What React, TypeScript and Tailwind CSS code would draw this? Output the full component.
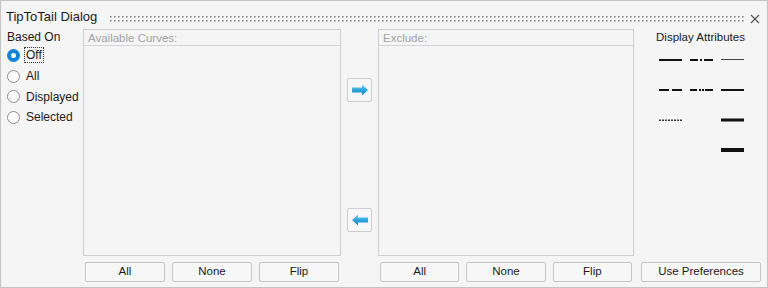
import React from "react";

const font = { fontFamily: '"Liberation Sans", Arial, sans-serif' };

function Btn({ label, w = "w-[80px]" }: { label: string; w?: string }) {
  return (
    <button
      className={`${w} h-[20px] border border-[#c6c6c6] rounded-[2px] bg-[#f7f7f7] text-[11.5px] text-[#1a1a1a] leading-none flex items-center justify-center`}
    >
      {label}
    </button>
  );
}

function ListBox({ title, w }: { title: string; w: string }) {
  return (
    <div className={`${w} h-[227px] border border-[#cfcfcf] flex flex-col`}>
      <div className="h-[16px] border-b border-[#d6d6d6] pl-[4px] text-[11.5px] text-[#a3a3a3] leading-[16px]">
        {title}
      </div>
      <div className="flex-1" />
    </div>
  );
}

function Radio({ label, checked, focus }: { label: string; checked?: boolean; focus?: boolean }) {
  return (
    <div className="flex items-center h-[20.7px]">
      {checked ? (
        <div className="w-[13px] h-[13px] rounded-full bg-[#0f84d6] flex items-center justify-center">
          <div className="w-[5px] h-[5px] rounded-full bg-white" />
        </div>
      ) : (
        <div className="w-[13px] h-[13px] rounded-full border border-[#8a8a8a] bg-white" />
      )}
      <span
        className={`ml-[4px] text-[12px] text-[#1a1a1a] leading-[14px] px-[1px] ${
          focus ? "border border-dotted border-[#333]" : "border border-transparent"
        }`}
      >
        {label}
      </span>
    </div>
  );
}

function Arrow({ dir }: { dir: "right" | "left" }) {
  return (
    <button className="w-[25px] h-[24px] border border-[#cdcdcd] rounded-[2px] bg-[#f7f7f7] flex items-center justify-center">
      <svg width="18" height="12" viewBox="0 0 18 12">
        <defs>
          <linearGradient id={`g${dir}`} x1="0" y1="0" x2="0" y2="1">
            <stop offset="0" stopColor="#7fd3f5" />
            <stop offset="0.5" stopColor="#2aa5de" />
            <stop offset="1" stopColor="#137fc0" />
          </linearGradient>
        </defs>
        {dir === "right" ? (
          <path d="M1 3.5 H11 V0.5 L17 6 L11 11.5 V8.5 H1 Z" fill={`url(#g${dir})`} />
        ) : (
          <path d="M17 3.5 H7 V0.5 L1 6 L7 11.5 V8.5 H17 Z" fill={`url(#g${dir})`} />
        )}
      </svg>
    </button>
  );
}

function Line({ kind }: { kind: string }) {
  const w = 23;
  return (
    <svg width={w} height="6" viewBox="0 0 23 6" className="block">
      {kind === "solid" && <rect x="0" y="2" width="23" height="2" fill="#111" />}
      {kind === "thin" && <rect x="0" y="2" width="23" height="1" fill="#444" />}
      {kind === "medium" && <rect x="0" y="2" width="23" height="2" fill="#111" />}
      {kind === "thick" && <rect x="0" y="1.5" width="23" height="3" fill="#111" />}
      {kind === "thicker" && <rect x="0" y="1" width="23" height="4" fill="#111" />}
      {kind === "dashdot" && (
        <g fill="#111">
          <rect x="0" y="2" width="8" height="2" />
          <rect x="10" y="2" width="2" height="2" />
          <rect x="14" y="2" width="9" height="2" />
        </g>
      )}
      {kind === "dashed" && (
        <g fill="#111">
          <rect x="0" y="2" width="10" height="2" />
          <rect x="13" y="2" width="10" height="2" />
        </g>
      )}
      {kind === "dashdotdot" && (
        <g fill="#111">
          <rect x="0" y="2" width="7" height="2" />
          <rect x="9" y="2" width="2" height="2" />
          <rect x="12" y="2" width="2" height="2" />
          <rect x="15" y="2" width="8" height="2" />
        </g>
      )}
      {kind === "dotted" && (
        <g fill="#333">
          {[0, 3, 6, 9, 12, 15, 18, 21].map((x) => (
            <rect key={x} x={x} y="2.5" width="2" height="1.5" />
          ))}
        </g>
      )}
    </svg>
  );
}

export default function App() {
  return (
    <div
      style={font}
      className="w-[768px] h-[288px] border border-[#c4c4c4] bg-[#f5f5f5] flex flex-col overflow-hidden"
    >
      {/* title bar */}
      <div className="h-[28px] flex items-start pt-[8px]">
        <span className="ml-[5px] text-[13px] leading-[16px] text-[#1a1a1a]">TipToTail Dialog</span>
        <svg width="634" height="8" className="ml-[13px] mt-[7px] shrink-0">
          <defs>
            <pattern id="grip" width="4" height="4" patternUnits="userSpaceOnUse">
              <rect x="0" y="0" width="1.5" height="1.5" fill="#7a7a7a" />
            </pattern>
          </defs>
          <rect x="0" y="0" width="634" height="6" fill="url(#grip)" />
        </svg>
        <svg width="10" height="10" viewBox="0 0 10 10" className="ml-[6px] mt-[5px]">
          <path d="M1 1 L9 9 M9 1 L1 9" stroke="#555" strokeWidth="1.2" />
        </svg>
      </div>

      {/* body */}
      <div className="flex flex-1">
        {/* Based On */}
        <div className="w-[82px] pl-[6px]">
          <div className="text-[12px] leading-[14px] text-[#1a1a1a] mt-[1px]">Based On</div>
          <div className="mt-[1px]">
            <Radio label="Off" checked focus />
            <Radio label="All" />
            <Radio label="Displayed" />
            <Radio label="Selected" />
          </div>
        </div>

        {/* Available */}
        <div className="w-[258px] flex flex-col">
          <ListBox title="Available Curves:" w="w-[258px]" />
          <div className="mt-[6px] px-[2px] flex gap-[7px]">
            <Btn label="All" />
            <Btn label="None" />
            <Btn label="Flip" />
          </div>
        </div>

        {/* arrows */}
        <div className="w-[37px] flex flex-col items-center pt-[49px]">
          <Arrow dir="right" />
          <div className="h-[106px]" />
          <Arrow dir="left" />
        </div>

        {/* Exclude */}
        <div className="w-[256px] flex flex-col">
          <ListBox title="Exclude:" w="w-[256px]" />
          <div className="mt-[6px] px-[2px] flex gap-[7px]">
            <Btn label="All" />
            <Btn label="None" />
            <Btn label="Flip" />
          </div>
        </div>

        {/* Display attributes */}
        <div className="flex-1 flex flex-col">
          <div className="text-[11.5px] leading-[14px] text-[#1a1a1a] mt-[1px] text-center">Display Attributes</div>
          <div className="flex-1 pl-[25px] pt-[13px]">
            <div className="grid grid-cols-[23px_23px_23px] gap-x-[8px] gap-y-[24px]">
              <Line kind="solid" />
              <Line kind="dashdot" />
              <Line kind="thin" />
              <Line kind="dashed" />
              <Line kind="dashdotdot" />
              <Line kind="medium" />
              <Line kind="dotted" />
              <div />
              <Line kind="thick" />
              <div />
              <div />
              <Line kind="thicker" />
            </div>
          </div>
          <div className="ml-[7px] mb-[5px]">
            <Btn label="Use Preferences" w="w-[120px]" />
          </div>
        </div>
      </div>
    </div>
  );
}
